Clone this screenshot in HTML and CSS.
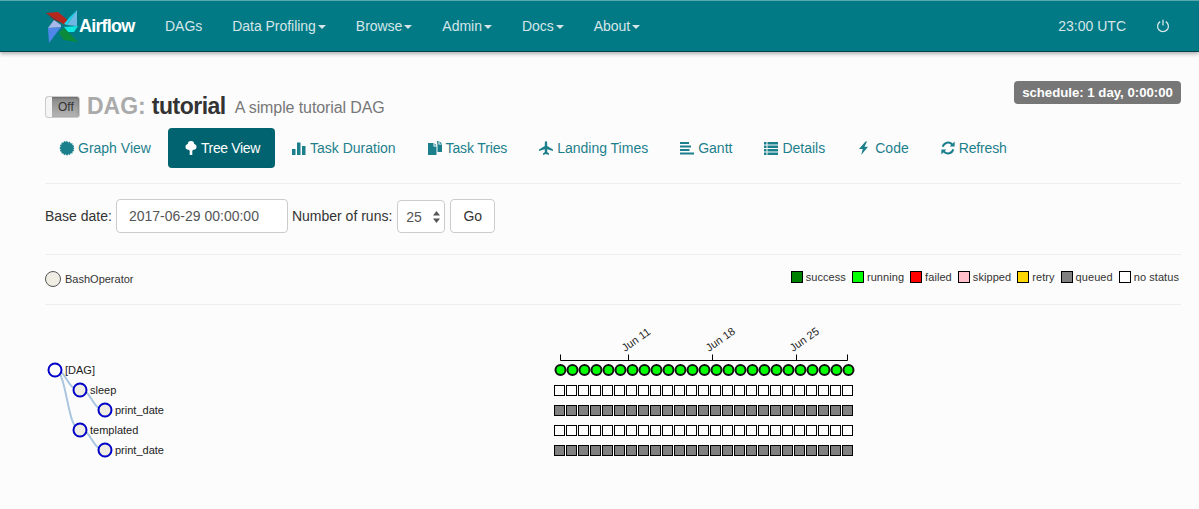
FILE: index.html
```html
<!DOCTYPE html>
<html lang="en">
<head>
<meta charset="utf-8">
<title>Airflow - tutorial</title>
<link rel="stylesheet" href="styles.css">
</head>
<body>
<header class="navbar">
  <a class="brand" href="#">
    <svg class="logo" viewBox="0 0 32 33" aria-hidden="true">
      <polygon class="b-red" points="0,3 12,2 24,12 19,15 9,9"/>
      <polygon class="b-dark" points="0,3 9,9 15,13 8,10"/>
      <polygon class="b-pale" points="31,0 31,16 21,15"/>
      <polygon class="b-cyan" points="31,0 21,15 18,14 23,8"/>
      <polygon class="b-lime" points="18,17 32,16 28,22 22,22"/>
      <polygon class="b-green" points="32,32 18,30 13,23 18,18 24,24"/>
      <polygon class="b-blue" points="3,33 2,18 15,17 9,25"/>
      <polygon class="b-sky" points="2,18 8,10 15,15 15,17"/>
    </svg>
    <span>Airflow</span>
  </a>
  <nav class="menu">
    <a href="#">DAGs</a>
    <a href="#">Data Profiling<i class="caret"></i></a>
    <a href="#">Browse<i class="caret"></i></a>
    <a href="#">Admin<i class="caret"></i></a>
    <a href="#">Docs<i class="caret"></i></a>
    <a href="#">About<i class="caret"></i></a>
  </nav>
  <div class="nav-right">
    <span class="clock">23:00 UTC</span>
    <svg class="power" viewBox="0 0 14 14" aria-hidden="true">
      <path d="M4.200 2.600a5.400 5.400 0 1 0 5.600 0"/>
      <path d="M7 .8v5.600"/>
    </svg>
  </div>
</header>

<main class="page">
  <div class="title-row">
    <h4 class="title">
      <span class="toggle"><span class="toggle-knob"></span><span class="toggle-text">Off</span></span>
      <span class="dag-label">DAG:</span>
      <span class="dag-name">tutorial</span>
      <small class="dag-desc">A simple tutorial DAG</small>
    </h4>
    <span class="badge">schedule: 1 day, 0:00:00</span>
  </div>

  <ul class="tabs">
    <li><a href="#"><svg class="ico" viewBox="0 0 14 14"><path d="M7 0l1.300 1.500L10 .6l.6 1.800 1.900-.2-.1 1.900 1.800.6-.9 1.700L14.700 7l-1.400 1.300.9 1.700-1.800.6.1 1.900-1.900-.2-.6 1.800-1.700-.9L7 14.700l-1.300-1.400-1.700.9-.6-1.800-1.900.2.1-1.900-1.800-.6.9-1.700L-.7 7l1.400-1.300-.9-1.700 1.800-.6-.1-1.900 1.900.2.6-1.800 1.700.9z"/></svg>Graph View</a></li>
    <li class="active"><a href="#"><svg class="ico ico-tree" viewBox="0 0 14 14"><circle cx="7" cy="3.300" r="3.200"/><circle cx="4.400" cy="5.800" r="2.900"/><circle cx="9.600" cy="5.800" r="2.900"/><circle cx="7" cy="7" r="2.800"/><rect x="5.700" y="7" width="2.600" height="7"/></svg>Tree View</a></li>
    <li><a href="#"><svg class="ico" viewBox="0 0 14 14"><rect x="0" y="8" width="3.500" height="6"/><rect x="5" y="1.500" width="3.500" height="12.500"/><rect x="10" y="5" width="3.500" height="9"/></svg>Task Duration</a></li>
    <li><a class="tight" href="#"><svg class="ico" viewBox="0 0 14 14"><path d="M0 2h5.500v3.500H8.500V14H0z"/><path d="M6.500 2.200L8.500 4.500H6.500z"/><path d="M9 0h1.500v3.500H14V11H9.500V5z"/><path d="M11.500 .2L14 2.700h-2.500z"/></svg>Task Tries</a></li>
    <li><a href="#"><svg class="ico" viewBox="0 0 14 14"><path d="M7 0c.8 0 1.200 1.200 1.200 2.500V5L14 8.500V10L8.200 8.200V11l1.800 1.500V14L7 13l-3 1v-1.500L5.800 11V8.200L0 10V8.500L5.800 5V2.500C5.800 1.200 6.200 0 7 0z"/></svg>Landing Times</a></li>
    <li><a href="#"><svg class="ico" viewBox="0 0 14 14"><rect y="1" width="9" height="2"/><rect y="4.500" width="11" height="2"/><rect y="8" width="9.500" height="2"/><rect y="11.500" width="14" height="2"/></svg>Gantt</a></li>
    <li><a href="#"><svg class="ico" viewBox="0 0 14 14"><rect y="1" width="2.500" height="2.500"/><rect x="3.500" y="1" width="10.500" height="2.500"/><rect y="4.500" width="2.500" height="2.500"/><rect x="3.500" y="4.500" width="10.500" height="2.500"/><rect y="8" width="2.500" height="2.500"/><rect x="3.500" y="8" width="10.500" height="2.500"/><rect y="11.500" width="2.500" height="2.500"/><rect x="3.500" y="11.500" width="10.500" height="2.500"/></svg>Details</a></li>
    <li><a href="#"><svg class="ico" viewBox="0 0 14 14"><path d="M8.500 .5L2 8h3.700L4.200 14 11 5.800H7.500L10 .5z"/></svg>Code</a></li>
    <li><a class="tight" href="#"><svg class="ico" viewBox="0 0 14 14"><path class="ring" d="M1.800 5.800A5.400 5.400 0 0 1 11.300 3.600"/><path d="M13.600.6v5h-5z"/><path class="ring" d="M12.200 8.200A5.400 5.400 0 0 1 2.700 10.400"/><path d="M.4 13.400v-5h5z"/></svg>Refresh</a></li>
  </ul>

  <form class="controls">
    <label class="ctl-label">Base date:</label>
    <input class="date-input" type="text" value="2017-06-29 00:00:00">
    <label class="ctl-label ctl-runs">Number of runs:</label>
    <span class="runs"><span>25</span>
      <svg class="spin" viewBox="0 0 7 12" aria-hidden="true"><path d="M3.500 0L7 4.500H0z"/><path d="M0 7.500h7L3.500 12z"/></svg>
    </span>
    <button class="go" type="button">Go</button>
  </form>

  <div class="legend-row">
    <div class="op"><i class="op-dot"></i><span class="op-name">BashOperator</span></div>
    <div class="states">
      <span class="state"><i class="sw s-success"></i>success</span>
      <span class="state"><i class="sw s-running"></i>running</span>
      <span class="state"><i class="sw s-failed"></i>failed</span>
      <span class="state"><i class="sw s-skipped"></i>skipped</span>
      <span class="state"><i class="sw s-retry"></i>retry</span>
      <span class="state"><i class="sw s-queued"></i>queued</span>
      <span class="state"><i class="sw s-none"></i>no status</span>
    </div>
  </div>

  <svg class="tree" width="1154" height="204" viewBox="45 305 1154 204">
    <defs>
      <g id="sq-row">
        <rect x="555" width="10" height="10"/><rect x="567" width="10" height="10"/><rect x="579" width="10" height="10"/><rect x="591" width="10" height="10"/><rect x="603" width="10" height="10"/>
        <rect x="615" width="10" height="10"/><rect x="627" width="10" height="10"/><rect x="639" width="10" height="10"/><rect x="651" width="10" height="10"/><rect x="663" width="10" height="10"/>
        <rect x="675" width="10" height="10"/><rect x="687" width="10" height="10"/><rect x="699" width="10" height="10"/><rect x="711" width="10" height="10"/><rect x="723" width="10" height="10"/>
        <rect x="735" width="10" height="10"/><rect x="747" width="10" height="10"/><rect x="759" width="10" height="10"/><rect x="771" width="10" height="10"/><rect x="783" width="10" height="10"/>
        <rect x="795" width="10" height="10"/><rect x="807" width="10" height="10"/><rect x="819" width="10" height="10"/><rect x="831" width="10" height="10"/><rect x="843" width="10" height="10"/>
      </g>
    </defs>
    <path class="link" d="M55 370C67 370 67 390 80 390"/>
    <path class="link" d="M80 390C92 390 92 410 105 410"/>
    <path class="link" d="M55 370C67 370 67 430 80 430"/>
    <path class="link" d="M80 430C92 430 92 450 105 450"/>
    <circle class="node node-root" cx="55" cy="370" r="6.500"/>
    <circle class="node" cx="80" cy="390" r="6.500"/>
    <circle class="node" cx="105" cy="410" r="6.500"/>
    <circle class="node" cx="80" cy="430" r="6.500"/>
    <circle class="node" cx="105" cy="450" r="6.500"/>
    <text class="node-label" x="65" y="374">[DAG]</text>
    <text class="node-label" x="90" y="394">sleep</text>
    <text class="node-label" x="115" y="414">print_date</text>
    <text class="node-label" x="90" y="434">templated</text>
    <text class="node-label" x="115" y="454">print_date</text>

    <path class="axis" d="M560.500 354.500v6h287v-6M628.500 354.500v6M712.500 354.500v6M796.500 354.500v6"/>
    <text class="tick" transform="translate(625 352) rotate(-35)">Jun 11</text>
    <text class="tick" transform="translate(709 352) rotate(-35)">Jun 18</text>
    <text class="tick" transform="translate(793 352) rotate(-35)">Jun 25</text>

    <g class="runs-row">
      <circle cx="560.500" cy="370" r="5"/><circle cx="572.500" cy="370" r="5"/><circle cx="584.500" cy="370" r="5"/><circle cx="596.500" cy="370" r="5"/><circle cx="608.500" cy="370" r="5"/>
      <circle cx="620.500" cy="370" r="5"/><circle cx="632.500" cy="370" r="5"/><circle cx="644.500" cy="370" r="5"/><circle cx="656.500" cy="370" r="5"/><circle cx="668.500" cy="370" r="5"/>
      <circle cx="680.500" cy="370" r="5"/><circle cx="692.500" cy="370" r="5"/><circle cx="704.500" cy="370" r="5"/><circle cx="716.500" cy="370" r="5"/><circle cx="728.500" cy="370" r="5"/>
      <circle cx="740.500" cy="370" r="5"/><circle cx="752.500" cy="370" r="5"/><circle cx="764.500" cy="370" r="5"/><circle cx="776.500" cy="370" r="5"/><circle cx="788.500" cy="370" r="5"/>
      <circle cx="800.500" cy="370" r="5"/><circle cx="812.500" cy="370" r="5"/><circle cx="824.500" cy="370" r="5"/><circle cx="836.500" cy="370" r="5"/><circle cx="848.500" cy="370" r="5"/>
    </g>
    <use class="row-none" href="#sq-row" x="-.5" y="385.500"/>
    <use class="row-queued" href="#sq-row" x="-.5" y="405.500"/>
    <use class="row-none" href="#sq-row" x="-.5" y="425.500"/>
    <use class="row-queued" href="#sq-row" x="-.5" y="445.500"/>
  </svg>
</main>
</body>
</html>
```
FILE: styles.css
```css
* { box-sizing: border-box; }
html, body { margin: 0; padding: 0; }
body {
  height: 509px;
  overflow: hidden;
  background: #fcfcfc;
  color: #333;
  font: 14px/20px "Liberation Sans", Arial, sans-serif;
}
a { text-decoration: none; color: inherit; }

/* navbar */
.navbar {
  height: 52px;
  display: flex;
  align-items: center;
  padding: 0 29px 0 46px;
  background: #017a86;
  border-top: 1px solid #5aa7b0;
  border-bottom: 1px solid #04444c;
  box-shadow: 0 2px 4px rgba(0, 0, 0, .3);
  color: #d6e6e8;
}
.brand {
  display: flex;
  align-items: center;
  width: 104px;
  color: #fff;
  font-size: 18px;
  font-weight: bold;
  letter-spacing: -.8px;
}
.logo { width: 32px; height: 33px; margin-right: 1px; flex: none; }
.b-red { fill: #b5261d; }
.b-dark { fill: #7d2a22; }
.b-cyan { fill: #18d9ee; }
.b-pale { fill: #6fb8e6; }
.b-green { fill: #0a8a3a; }
.b-lime { fill: #10e8e0; }
.b-blue { fill: #4f86ea; }
.b-sky { fill: #a8b8e8; }
.menu { display: flex; }
.menu a { padding: 0 15px; white-space: nowrap; letter-spacing: -.03px; }
.caret {
  display: inline-block;
  margin-left: 2px;
  vertical-align: middle;
  border-top: 4px solid #d6e6e8;
  border-left: 4px solid transparent;
  border-right: 4px solid transparent;
}
.nav-right { margin-left: auto; display: flex; align-items: center; gap: 30px; }
.clock { white-space: nowrap; }
.power {
  width: 14px;
  height: 14px;
  fill: none;
  stroke: #d6e6e8;
  stroke-width: 1.300;
}

/* page */
.page { padding: 0 18px 0 45px; }
.title-row {
  height: 76px;
  padding-top: 29px;
  display: flex;
  justify-content: space-between;
  align-items: flex-start;
}
.title {
  display: flex;
  align-items: center;
  margin: 13px 0 0;
  font-weight: normal;
  height: 24px;
}
.toggle {
  position: relative;
  display: block;
  width: 35px;
  height: 22px;
  margin: 1px 7px 0 0;
  background: linear-gradient(#888, #b5b5b5);
  border: 1px solid #ccc;
  border-radius: 3px;
  box-shadow: inset 0 1px 3px rgba(0, 0, 0, .25);
  overflow: hidden;
}
.toggle-knob {
  position: absolute;
  left: 0;
  top: 0;
  bottom: 0;
  width: 6px;
  background: #f5f5f5;
}
.toggle-text {
  position: absolute;
  left: 12px;
  top: 0;
  font-size: 12px;
  line-height: 20px;
  color: #333;
}
.dag-label, .dag-name { font-size: 23px; font-weight: bold; line-height: 24px; }
.dag-label { color: #aaa; margin-right: 6px; }
.dag-name { color: #333; margin-right: 9px; letter-spacing: -.5px; }
.dag-desc { font-size: 16px; color: #777; padding-top: 3px; letter-spacing: -.1px; }
.badge {
  width: 167px;
  height: 23px;
  text-align: center;
  background: #777;
  color: #fff;
  font-size: 13.200px;
  font-weight: bold;
  line-height: 23px;
  border-radius: 4px;
  white-space: nowrap;
}

/* tabs */
.tabs {
  list-style: none;
  display: flex;
  gap: 2px;
  margin: 0;
  padding: 0 0 15px;
  height: 56px;
  border-bottom: 1px solid #eee;
}
.tabs a {
  display: flex;
  align-items: center;
  height: 40px;
  padding: 0 15px;
  color: #1c7f8c;
  border-radius: 4px;
  white-space: nowrap;
}
.tabs a.tight { letter-spacing: -.15px; }
.ico { width: 14px; height: 14px; margin-right: 4px; fill: currentColor; flex: none; overflow: visible; }
.ico-tree { margin-left: 1px; margin-right: 3px; }
.ring { fill: none; stroke: currentColor; stroke-width: 2; }
.tabs .active a { background: #00636f; color: #fff; letter-spacing: -.35px; }

/* controls */
.controls {
  display: flex;
  align-items: center;
  height: 71px;
  border-bottom: 1px solid #eee;
  padding-bottom: 6px;
}
.ctl-label { margin-right: 4px; }
.ctl-runs { margin-right: 5px; }
.date-input {
  width: 172px;
  height: 34px;
  margin-right: 4px;
  padding: 0 12px;
  border: 1px solid #ccc;
  border-radius: 4px;
  background: #fff;
  color: #555;
  font: 14px "Liberation Sans", Arial, sans-serif;
}
.runs {
  display: flex;
  align-items: center;
  justify-content: space-between;
  width: 48px;
  height: 33px;
  margin: 1px 5px 0 0;
  padding: 0 4px 0 8px;
  background: #fff;
  border: 1px solid #ccc;
  border-radius: 4px;
  color: #555;
}
.spin { width: 7px; height: 12px; fill: #555; }
.go {
  width: 45px;
  height: 34px;
  padding: 0;
  background: #fff;
  border: 1px solid #ccc;
  border-radius: 4px;
  color: #333;
  font: 14px "Liberation Sans", Arial, sans-serif;
}

/* legend */
.legend-row {
  display: flex;
  justify-content: space-between;
  align-items: center;
  height: 50px;
  border-bottom: 1px solid #eee;
  font-size: 11px;
}
.op { display: flex; align-items: center; margin-top: -1px; }
.op-dot {
  width: 16px;
  height: 16px;
  margin-right: 4px;
  border: 1px solid #555;
  border-radius: 50%;
  background: #f0ede4;
}
.op-name { color: #333; }
.states { display: flex; margin: -5px 2px 0 0; gap: 6px; letter-spacing: .07px; }
.state { display: flex; align-items: center; color: #333; white-space: nowrap; }
.sw {
  width: 12px;
  height: 12px;
  margin-right: 3px;
  border: 1px solid #000;
}
.s-success { background: #008000; }
.s-running { background: #00ff00; }
.s-failed { background: #ff0000; }
.s-skipped { background: #ffc0cb; }
.s-retry { background: #ffd700; }
.s-queued { background: #808080; }
.s-none { background: #fff; }

/* tree */
.tree { display: block; overflow: visible; }
.link { fill: none; stroke: #a9c6de; stroke-width: 2; }
.node { fill: #f0ede4; stroke: #0000c8; stroke-width: 2; }
.node-root { fill: #fff; }
.node-label { font: 11px "Liberation Sans", Arial, sans-serif; fill: #222; }
.axis { fill: none; stroke: #000; stroke-width: 1; }
.tick { font: 11px "Liberation Sans", Arial, sans-serif; fill: #222; }
.runs-row circle { fill: #00ff00; stroke: #111; stroke-width: 2; }
.row-none { fill: #fff; stroke: #000; stroke-width: 1; }
.row-queued { fill: #808080; stroke: #000; stroke-width: 1; }
```
